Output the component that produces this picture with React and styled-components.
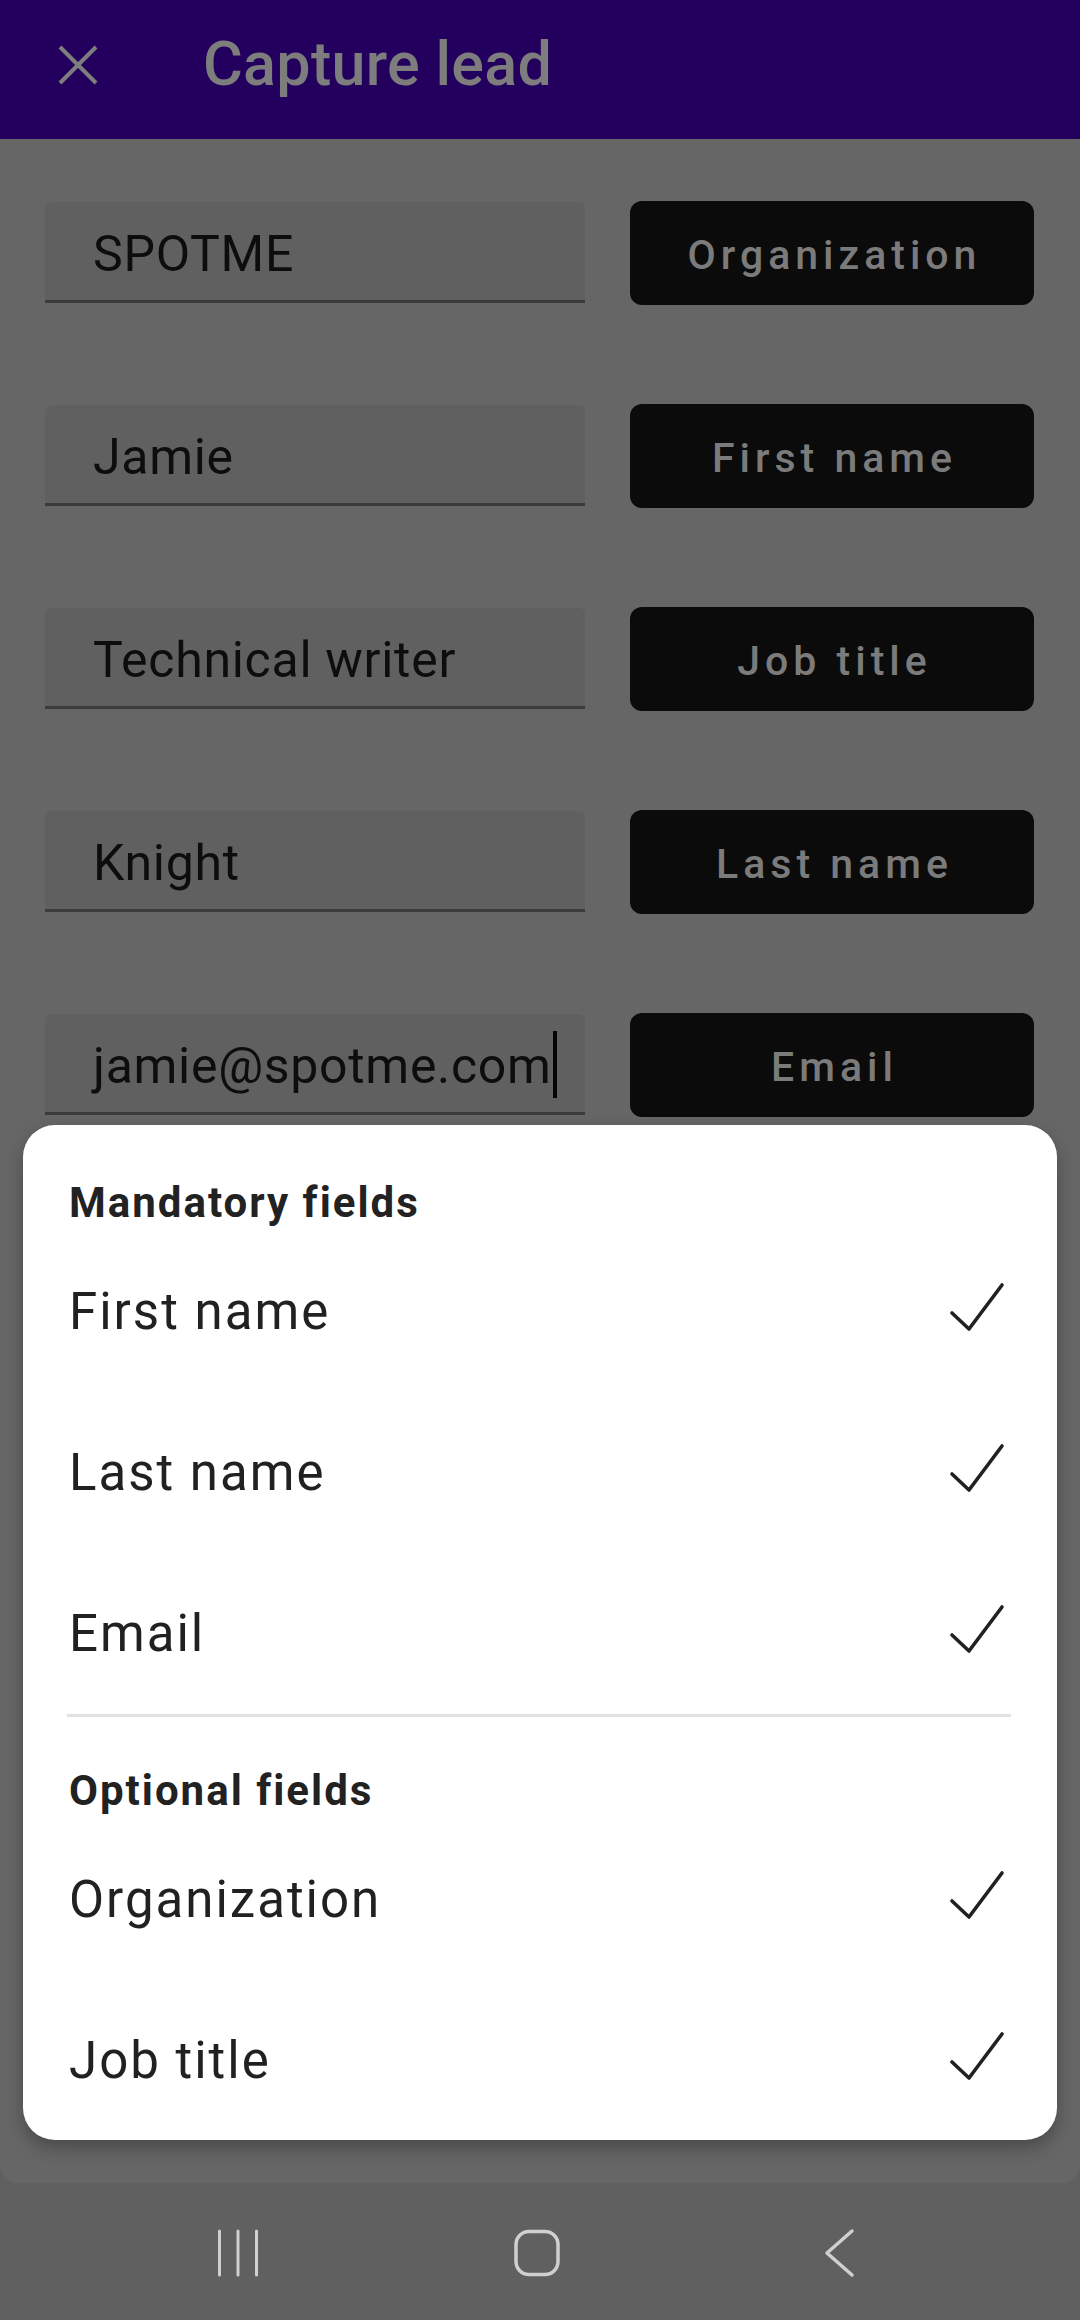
import React from 'react';
import styled, { createGlobalStyle } from 'styled-components';

const GlobalStyle = createGlobalStyle`
  body {
    margin: 0;
    font-family: Roboto, "Liberation Sans", sans-serif;
  }
`;

const fields = [
  { value: 'SPOTME', label: 'Organization' },
  { value: 'Jamie', label: 'First name' },
  { value: 'Technical writer', label: 'Job title' },
  { value: 'Knight', label: 'Last name' },
  { value: 'jamie@spotme.com', label: 'Email', focused: true },
];

const mandatory = ['First name', 'Last name', 'Email'];
const optional = ['Organization', 'Job title'];

const CloseIcon = () => (
  <svg width="40" height="40" viewBox="0 0 40 40">
    <path d="M2 2 L38 38 M38 2 L2 38" stroke="#7e7e7e" strokeWidth="4" strokeLinecap="butt" />
  </svg>
);

const CheckIcon = () => (
  <svg width="60" height="60" viewBox="0 0 60 60">
    <path d="M4 31 L21 47 L54 3" fill="none" stroke="#212121" strokeWidth="3.6" strokeLinecap="round" strokeLinejoin="round" />
  </svg>
);

const App = () => {
  return (
    <Screen>
      <GlobalStyle />
      <Header>
        <CloseButton><CloseIcon /></CloseButton>
        <Title>Capture lead</Title>
      </Header>

      <Form>
        {fields.map(f => (
          <Row key={f.label}>
            <Field>
              <FieldValue>{f.value}</FieldValue>
              {f.focused && <Caret />}
            </Field>
            <MapButton>{f.label}</MapButton>
          </Row>
        ))}
      </Form>

      <NavBar>
        <NavSlot>
          <svg width="44" height="48" viewBox="0 0 44 48">
            <path d="M3.5 2 V46 M22 2 V46 M40.5 2 V46" stroke="#d0d0d0" strokeWidth="3" strokeLinecap="round" />
          </svg>
        </NavSlot>
        <NavSlot shift="-6px">
          <svg width="48" height="48" viewBox="0 0 48 48">
            <rect x="3" y="2.5" width="42" height="43" rx="13" fill="none" stroke="#d0d0d0" strokeWidth="3.5" />
          </svg>
        </NavSlot>
        <NavSlot shift="-4px">
          <svg width="32" height="50" viewBox="0 0 32 50">
            <path d="M28 3 L3 25 L28 47" fill="none" stroke="#d0d0d0" strokeWidth="3.5" strokeLinecap="round" strokeLinejoin="round" />
          </svg>
        </NavSlot>
      </NavBar>

      <Sheet>
        <SectionTitle>Mandatory fields</SectionTitle>
        {mandatory.map(m => (
          <Option key={m}>
            <OptionLabel>{m}</OptionLabel>
            <CheckIcon />
          </Option>
        ))}
        <Divider />
        <SectionTitle spaced>Optional fields</SectionTitle>
        {optional.map(o => (
          <Option key={o}>
            <OptionLabel>{o}</OptionLabel>
            <CheckIcon />
          </Option>
        ))}
      </Sheet>
    </Screen>
  );
};

const Screen = styled.div`
  position: relative;
  width: 1080px;
  height: 2320px;
  display: flex;
  flex-direction: column;
  background: #606060;
  overflow: hidden;
`;

const Header = styled.header`
  height: 139px;
  flex-shrink: 0;
  background: #24005e;
  display: flex;
  align-items: center;
  padding: 0 0 10px 58px;
  box-sizing: border-box;
`;

const CloseButton = styled.div`
  width: 40px;
  height: 40px;
  display: flex;
`;

const Title = styled.h1`
  margin: 0 0 0 105px;
  font-size: 61px;
  font-weight: 500;
  letter-spacing: 0.3px;
  color: #7d7d7d;
  line-height: 1;
`;

const Form = styled.main`
  flex: 1;
  background: #666666;
  border-radius: 0 0 18px 18px;
  padding: 62px 46px 0 45px;
  display: flex;
  flex-direction: column;
  gap: 99px;
`;

const Row = styled.div`
  display: grid;
  grid-template-columns: 540px 404px;
  column-gap: 45px;
  align-items: start;
  height: 104px;
`;

const Field = styled.div`
  margin-top: 1px;
  height: 101px;
  box-sizing: border-box;
  background: #606060;
  border-radius: 6px 6px 0 0;
  border-bottom: 3px solid #3b3b3b;
  display: flex;
  align-items: center;
  padding: 6px 0 0 48px;
`;

const FieldValue = styled.span`
  font-size: 50px;
  letter-spacing: 0.7px;
  color: #0d0d0d;
  line-height: 1.2;
`;

const Caret = styled.span`
  width: 4px;
  height: 67px;
  margin-left: 1px;
  margin-top: -4px;
  background: #050505;
`;

const MapButton = styled.div`
  height: 104px;
  box-sizing: border-box;
  background: #0b0b0b;
  border-radius: 12px;
  display: flex;
  align-items: center;
  justify-content: center;
  font-size: 41px;
  font-weight: 500;
  letter-spacing: 5px;
  color: #7b7b7b;
  padding: 4px 0 0 5px;
`;

const NavBar = styled.nav`
  height: 137px;
  flex-shrink: 0;
  display: grid;
  grid-template-columns: repeat(3, 302px);
  justify-content: center;
  align-items: center;
  padding-top: 2px;
  box-sizing: border-box;
`;

const NavSlot = styled.div`
  display: flex;
  justify-content: center;
  align-items: center;
  margin-left: ${p => p.shift || '0'};
`;

const Sheet = styled.section`
  position: absolute;
  top: 1125px;
  left: 23px;
  right: 23px;
  background: #ffffff;
  border-radius: 32px;
  padding: 50px 46px 0 46px;
  box-shadow: 0 8px 18px rgba(0, 0, 0, 0.28);
  overflow: hidden;
  height: 1015px;
  box-sizing: border-box;
`;

const SectionTitle = styled.h2`
  margin: ${p => (p.spaced ? '46px' : '0')} 0 0 0;
  font-size: 42px;
  line-height: 56px;
  font-weight: 700;
  letter-spacing: 2px;
  color: #222222;
`;

const Option = styled.div`
  height: 161px;
  display: flex;
  align-items: center;
  justify-content: space-between;
  padding-right: 3px;
`;

const OptionLabel = styled.span`
  font-size: 51px;
  letter-spacing: 2px;
  color: #212121;
  line-height: 1.2;
`;

const Divider = styled.hr`
  margin: 0 0 0 -2px;
  border: none;
  height: 3px;
  background: #e2e2e2;
`;

export default App;
